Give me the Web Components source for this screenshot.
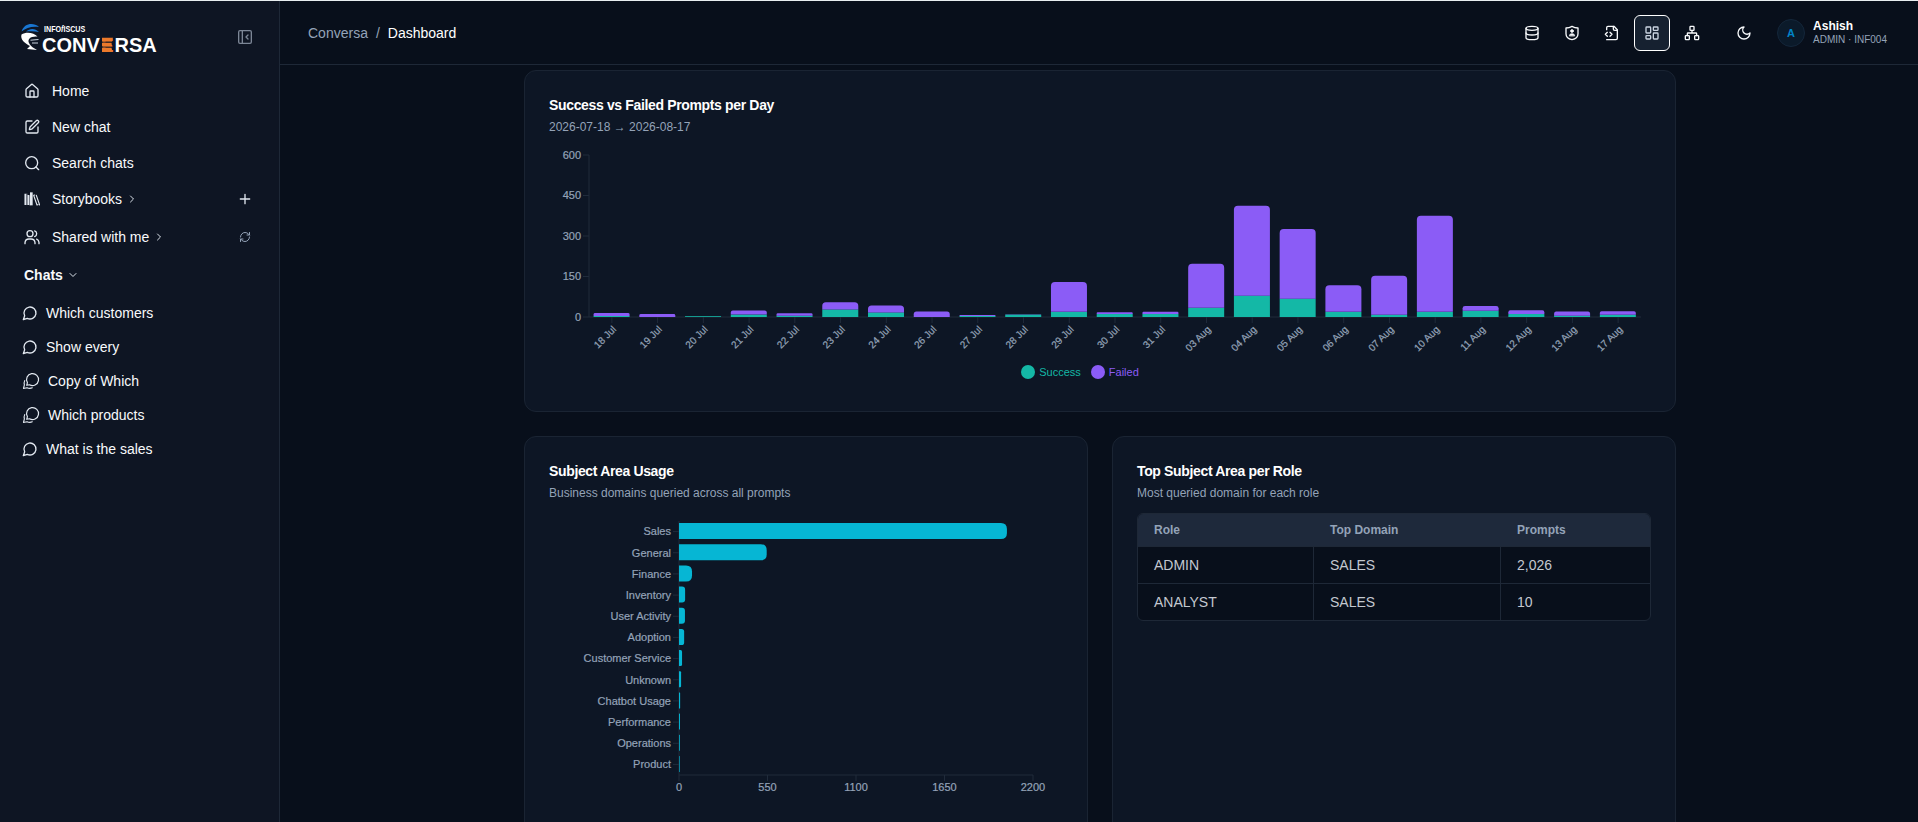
<!DOCTYPE html>
<html lang="en">
<head>
<meta charset="utf-8">
<title>Conversa - Dashboard</title>
<style>
  :root {
    --bg: #080f1b;
    --panel: #0e1523;
    --card: #0d1625;
    --line: #1e2837;
    --fg: #f8fafc;
    --muted: #94a3b8;
    --teal: #14b8a6;
    --violet: #8b5cf6;
    --cyan: #06b6d4;
  }
  html, body { height: 100%; }
  body {
    margin: 0;
    overflow: hidden;
    background: var(--bg);
    color: var(--fg);
    font: 14px/20px "Liberation Sans", Arial, sans-serif;
  }
</style>
</head>
<body>
<conversa-app></conversa-app>

<script>
const ICONS = {
  home: '<path d="M15 21v-8a1 1 0 0 0-1-1h-4a1 1 0 0 0-1 1v8"/><path d="M3 10a2 2 0 0 1 .709-1.528l7-5.999a2 2 0 0 1 2.582 0l7 5.999A2 2 0 0 1 21 10v9a2 2 0 0 1-2 2H5a2 2 0 0 1-2-2z"/>',
  edit: '<path d="M12 3H5a2 2 0 0 0-2 2v14a2 2 0 0 0 2 2h14a2 2 0 0 0 2-2v-7"/><path d="M18.375 2.625a1 1 0 0 1 3 3l-9.013 9.014a2 2 0 0 1-.853.505l-2.873.84a.5.5 0 0 1-.62-.62l.84-2.873a2 2 0 0 1 .506-.852z"/>',
  search: '<circle cx="11.500" cy="11.500" r="9"/><path d="m22 22-4-4"/>',
  books: '<path d="M2 4v17M6.500 6v15" stroke-width="2.600" stroke-linecap="butt"/><path d="M11 2v19.500" stroke-width="4" stroke-linecap="butt"/><path d="M4.300 4.500v16M8.700 7v14" stroke-width=".8"/><path d="m14.500 6.500 5 14.500M18.500 6.500 23.500 21M14.500 6.500l1.500-.5M19.500 21l1.500-.5" stroke-width="1.700"/>',
  users: '<path d="M16.500 22v-1.500a6 6 0 0 0-6-5.500h-3a6 6 0 0 0-6 5.500V22"/><circle cx="9" cy="7" r="4.500"/><path d="M22.500 22v-2a6 6 0 0 0-3.500-4.800M16 2.800a4.500 4.500 0 0 1 0 8.500"/>',
  right: '<path d="m9 18 6-6-6-6"/>',
  down: '<path d="m6 9 6 6 6-6"/>',
  plus: '<path d="M5 12h14M12 5v14"/>',
  refresh: '<path d="M3 12a9 9 0 0 1 9-9 9.750 9.750 0 0 1 6.740 2.740L21 8"/><path d="M21 3v5h-5"/><path d="M21 12a9 9 0 0 1-9 9 9.750 9.750 0 0 1-6.740-2.740L3 16"/><path d="M8 16H3v5"/>',
  panel: '<rect width="19" height="19" x="2.500" y="2.500" rx="2"/><path d="M8 2.500v19M16.500 15l-3-3 3-3"/>',
  chat: '<path d="M7.900 20A9 9 0 1 0 4 16.100L2 22Z"/>',
  chats: '<path d="M10 17A8 8 0 1 0 7.200 14.200L6.300 17.700Z" stroke-width="1.600"/><path d="M3.600 11.500a8 8 0 0 0-.4 5.800L2 22l4.700-1.100a8.500 8.500 0 0 0 7 .2" stroke-width="1.500"/>',
  database: '<ellipse cx="12" cy="5" rx="9" ry="3"/><path d="M3 5v14a9 3 0 0 0 18 0V5"/><path d="M3 12a9 3 0 0 0 18 0"/>',
  shield: '<path d="M21 13c0 5-4 8-9 9-5-1-9-4-9-9V4.500c3.500 0 6-.7 9-2.500 3 1.800 5.500 2.500 9 2.500z"/><circle cx="12" cy="9" r="2" fill="currentColor" stroke-width="1.500"/><path d="M8 16c0-2 1.500-3 4-3s4 1 4 3z" fill="currentColor" stroke-width="1"/>',
  filecode: '<path d="M4 22h14a2 2 0 0 0 2-2V7l-5-5H6a2 2 0 0 0-2 2v3"/><path d="M14 2v4a2 2 0 0 0 2 2h4"/><path d="m5 11-3 3 3 3M9 17l3-3-3-3"/>',
  dashboard: '<rect width="7" height="9" x="3" y="3" rx="1"/><rect width="7" height="5" x="14" y="3" rx="1"/><rect width="7" height="9" x="14" y="12" rx="1"/><rect width="7" height="5" x="3" y="16" rx="1"/>',
  network: '<rect x="16" y="16" width="6" height="6" rx="1"/><rect x="2" y="16" width="6" height="6" rx="1"/><rect x="9" y="2" width="6" height="6" rx="1"/><path d="M5 16v-3a1 1 0 0 1 1-1h12a1 1 0 0 1 1 1v3M12 12V8"/>',
  moon: '<path d="M12 3a6 6 0 0 0 9 9 9 9 0 1 1-9-9Z"/>'
};

/* --- icon --- */
class UiIcon extends HTMLElement {
  connectedCallback() {
    const size = this.getAttribute('size') || 16;
    const root = this.attachShadow({ mode: 'open' });
    root.innerHTML = `
      <style>
        :host { display: block; flex: none; width: ${size}px; height: ${size}px; }
        svg { display: block; fill: none; stroke: currentColor; stroke-width: 2; stroke-linecap: round; stroke-linejoin: round; }
      </style>
      <svg width="${size}" height="${size}" viewBox="0 0 24 24">${ICONS[this.getAttribute('name')]}</svg>`;
  }
}

/* --- logo --- */
class AppLogo extends HTMLElement {
  constructor() {
    super();
    this.attachShadow({ mode: 'open' }).innerHTML = `
      <style>
        :host { display: block; width: 140px; height: 44px; }
        svg { display: block; }
        text { font-family: "Liberation Sans", Arial, sans-serif; font-weight: bold; fill: #fff; }
        .e { fill: #ed7a2b; }
      </style>
      <svg width="140" height="44" viewBox="20 15 140 44">
        <path d="M21.500 31.500C24 23.500 33 22 39 27C32 26 26.500 27.500 21.500 31.500Z" fill="#1976d2"/>
        <path d="M26 31.500C30 28 35 28 39 32C35 31 30 31 26 31.500Z" fill="#1976d2"/>
        <path d="M21.500 34.500C20 39.500 25 43.500 30 46L27 49L37 50L32.500 47.200C28 43.500 26.500 39 32 37C34 36.300 36 36.300 37.500 36.500C34 32.500 26 31.500 21.500 34.500Z" fill="#fff"/>
        <path d="M30.500 40.200l8-.7M32 43h6" stroke="#cbd5e1" stroke-width="1"/>
        <text transform="translate(44 31.500) scale(.77 1)" font-size="9.300">INFO<tspan font-style="italic">f</tspan>ISCUS</text>
        <text y="52" font-size="20"><tspan x="42">CONV</tspan><tspan x="101.500" class="e" font-size="18" dy="-.5">E</tspan><tspan x="114.500" dy=".5">RSA</tspan></text>
        <path d="M102 37.800h11l-1 4h-10zM102 42.600h9.500l.5 4h-10zM102 47.500h9.500l1 4.500H102z" fill="#ed7a2b"/>
        <path d="M102 42.200h10M102 47.050h10" stroke="#0e1523" stroke-width=".8"/>
      </svg>`;
  }
}

/* --- sidebar row --- */
class NavItem extends HTMLElement {
  connectedCallback() {
    const icon = this.getAttribute('icon');
    const caret = this.getAttribute('caret');
    const action = this.getAttribute('action');
    this.attachShadow({ mode: 'open' }).innerHTML = `
      <style>
        :host { display: flex; align-items: center; height: 36px; padding: 0 26px 0 24px; gap: 12px; }
        :host([chat]) { height: 34px; gap: 8px; padding-left: 22px; }
        :host([heading]) { font-weight: bold; }
        .label { display: flex; align-items: center; gap: 4px; flex: 1; white-space: nowrap; }
        ui-icon { color: #e2e8f0; }
        .label ui-icon { color: #dbe2ea; }
        .dim { color: #94a3b8; margin-right: 2px; }
      </style>
      ${icon ? `<ui-icon name="${icon}" size="${icon === 'chats' ? 18 : 16}"></ui-icon>` : ''}
      <span class="label"><slot></slot>${caret ? `<ui-icon name="${caret}" size="12"></ui-icon>` : ''}</span>
      ${action ? `<ui-icon name="${action}" size="${action === 'plus' ? 16 : 12}" class="${action === 'plus' ? '' : 'dim'}"></ui-icon>` : ''}`;
  }
}

class AppSidebar extends HTMLElement {
  constructor() {
    super();
    this.attachShadow({ mode: 'open' }).innerHTML = `
      <style>
        :host { display: block; box-sizing: border-box; width: 280px; background: var(--panel); border-right: 1px solid var(--line); }
        .top { display: flex; justify-content: space-between; align-items: center; height: 44px; padding: 14px 26px 14px 20px; }
        .top ui-icon { color: #7c8696; }
        nav { display: flex; flex-direction: column; }
        nav nav-item:nth-child(5) { margin-top: 2px; }
        nav nav-item:nth-child(6) { margin: 2px 0 3px; }
      </style>
      <div class="top"><app-logo></app-logo><ui-icon name="panel"></ui-icon></div>
      <nav>
        <nav-item icon="home">Home</nav-item>
        <nav-item icon="edit">New chat</nav-item>
        <nav-item icon="search">Search chats</nav-item>
        <nav-item icon="books" caret="right" action="plus">Storybooks</nav-item>
        <nav-item icon="users" caret="right" action="refresh">Shared with me</nav-item>
        <nav-item heading caret="down">Chats</nav-item>
        <nav-item chat icon="chat">Which customers</nav-item>
        <nav-item chat icon="chat">Show every</nav-item>
        <nav-item chat icon="chats">Copy of Which</nav-item>
        <nav-item chat icon="chats">Which products</nav-item>
        <nav-item chat icon="chat">What is the sales</nav-item>
      </nav>`;
  }
}

/* --- header --- */
class AppHeader extends HTMLElement {
  constructor() {
    super();
    this.attachShadow({ mode: 'open' }).innerHTML = `
      <style>
        :host { display: flex; align-items: center; box-sizing: border-box; height: 64px; padding: 0 31px 0 28px; border-bottom: 1px solid var(--line); }
        .crumbs { display: flex; gap: 8px; flex: 1; color: var(--muted); }
        .crumbs b { font-weight: normal; color: #fff; }
        .tools { display: flex; gap: 4px; }
        .btn { display: flex; align-items: center; justify-content: center; box-sizing: border-box; width: 36px; height: 36px; border: 1px solid transparent; border-radius: 6px; }
        .btn.active { border-color: #fff; background: #162130; color: #cbd5e1; }
        .theme { margin-left: 12px; }
        .avatar { display: flex; align-items: center; justify-content: center; box-sizing: border-box; width: 28px; height: 28px; margin: 0 8px 0 15px; border: 1px solid #14263a; border-radius: 50%; background: #0b1a2a; color: #0284c7; font: bold 11px "Liberation Sans", Arial, sans-serif; }
        .who { font-size: 10px; line-height: 12px; color: var(--muted); }
        .who b { display: block; font-size: 12px; line-height: 15px; color: #fff; }
      </style>
      <div class="crumbs"><span>Conversa</span><span>/</span><b>Dashboard</b></div>
      <div class="tools">
        <span class="btn"><ui-icon name="database"></ui-icon></span>
        <span class="btn"><ui-icon name="shield"></ui-icon></span>
        <span class="btn"><ui-icon name="filecode"></ui-icon></span>
        <span class="btn active"><ui-icon name="dashboard"></ui-icon></span>
        <span class="btn"><ui-icon name="network"></ui-icon></span>
        <span class="btn theme"><ui-icon name="moon"></ui-icon></span>
      </div>
      <span class="avatar">A</span>
      <div class="who"><b>Ashish</b>ADMIN · INF004</div>`;
  }
}

/* --- card --- */
class DashCard extends HTMLElement {
  connectedCallback() {
    this.attachShadow({ mode: 'open' }).innerHTML = `
      <style>
        :host { display: block; box-sizing: border-box; padding: 24px; border: 1px solid #1a2433; border-radius: 12px; background: var(--card); }
        h3 { margin: 0; font-size: 14px; line-height: 20px; letter-spacing: -0.35px; color: #fff; }
        p { margin: 4px 0 12px; font-size: 12px; line-height: 16px; color: var(--muted); }
      </style>
      <h3>${this.getAttribute('heading')}</h3>
      <p>${this.getAttribute('note')}</p>
      <slot></slot>`;
  }
}

const CHART_STYLE = `
  :host { display: block; }
  svg { display: block; }
  text { font-family: "Liberation Sans", Arial, sans-serif; font-size: 11px; fill: #94a3b8; stroke: #94a3b8; stroke-width: .2; }
  .axis { stroke: #202b3b; fill: none; }`;

/* --- stacked chart: [day, success, failed] --- */
class PromptsChart extends HTMLElement {
  #data = [
    ['18 Jul', 4, 11], ['19 Jul', 0, 11], ['20 Jul', 3, 0], ['21 Jul', 9, 15], ['22 Jul', 5, 9],
    ['23 Jul', 28, 27], ['24 Jul', 17, 26], ['26 Jul', 0, 20], ['27 Jul', 4, 3], ['28 Jul', 9, 1],
    ['29 Jul', 19, 111], ['30 Jul', 11, 7], ['31 Jul', 11, 8], ['03 Aug', 34, 163], ['04 Aug', 79, 333],
    ['05 Aug', 68, 258], ['06 Aug', 19, 99], ['07 Aug', 8, 145], ['10 Aug', 19, 356], ['11 Aug', 23, 18],
    ['12 Aug', 11, 14], ['13 Aug', 5, 15], ['17 Aug', 8, 13]
  ];

  connectedCallback() {
    const x0 = 40, y0 = 170, top = 8;
    const step = 1052 / this.#data.length;
    const k = (y0 - top) / 600;
    let out = '';

    for (const v of [0, 150, 300, 450, 600]) {
      const y = y0 - v * k;
      out += `<path class="axis" d="M${x0 - 6} ${y}h6"/><text x="${x0 - 8}" y="${y + 3.9}" text-anchor="end">${v}</text>`;
    }
    out += `<path class="axis" d="M${x0} ${top}V${y0}H${x0 + 1052}"/>`;

    this.#data.forEach(([day, ok, bad], i) => {
      const x = x0 + step * (i + 0.1);
      const cx = x0 + step * (i + 0.5);
      const hs = ok * k, hf = bad * k;
      const r = Math.min(4, hf / 2);
      out += `<path class="axis" d="M${cx} ${y0}v6"/>`;
      out += `<rect x="${x}" y="${y0 - hs}" width="36" height="${hs}" fill="var(--teal)"/>`;
      if (hf) out += `<path fill="var(--violet)" d="M${x} ${y0 - hs}v${r - hf}q0 ${-r} ${r} ${-r}h${36 - 2 * r}q${r} 0 ${r} ${r}v${hf - r}z"/>`;
      out += `<text class="day" x="${cx}" y="${y0 + 8}" dy="0.71em" text-anchor="end" transform="rotate(-45 ${cx} ${y0 + 8})">${day}</text>`;
    });

    this.attachShadow({ mode: 'open' }).innerHTML = `
      <style>
        ${CHART_STYLE}
        .day { font-size: 10px; }
        .legend { display: flex; justify-content: center; gap: 10px; margin-right: 40px; font-size: 11px; line-height: 16px; }
        .legend span { display: flex; align-items: center; gap: 4px; color: var(--c); }
        .legend i { width: 14px; height: 14px; border-radius: 50%; background: var(--c); }
      </style>
      <svg width="1102" height="217">${out}</svg>
      <div class="legend">
        <span style="--c: var(--teal)"><i></i>Success</span>
        <span style="--c: var(--violet)"><i></i>Failed</span>
      </div>`;
  }
}

/* --- horizontal bars --- */
class AreaChart extends HTMLElement {
  #data = [
    ['Sales', 2038], ['General', 545], ['Finance', 81], ['Inventory', 38], ['User Activity', 37],
    ['Adoption', 32], ['Customer Service', 19], ['Unknown', 13], ['Chatbot Usage', 7],
    ['Performance', 6], ['Operations', 5], ['Product', 4]
  ];

  connectedCallback() {
    const x0 = 130, top = 8, height = 254, width = 354;
    const step = height / this.#data.length;
    const bottom = top + height;
    let out = `<path class="axis" d="M${x0} ${top}V${bottom}H${x0 + width}"/>`;

    this.#data.forEach(([name, value], i) => {
      const y = top + step * (i + 0.1);
      const cy = top + step * (i + 0.5);
      const w = value / 2200 * width;
      const r = Math.min(6, w / 2);
      out += `<path class="axis" d="M${x0 - 6} ${cy}h6"/>`;
      out += `<path fill="var(--cyan)" d="M${x0} ${y}h${w - r}q${r} 0 ${r} ${r}v${16 - 2 * r}q0 ${r} ${-r} ${r}h${r - w}z"/>`;
      out += `<text x="${x0 - 8}" y="${cy + 3.9}" text-anchor="end">${name}</text>`;
    });

    for (const v of [0, 550, 1100, 1650, 2200]) {
      const x = x0 + v / 2200 * width;
      out += `<path class="axis" d="M${x} ${bottom}v6"/><text x="${x}" y="${bottom + 16}" text-anchor="middle">${v}</text>`;
    }

    this.attachShadow({ mode: 'open' }).innerHTML = `
      <style>${CHART_STYLE}</style>
      <svg width="514" height="300">${out}</svg>`;
  }
}

/* --- table --- */
class RoleTable extends HTMLElement {
  constructor() {
    super();
    const rows = [['ADMIN', 'SALES', '2,026'], ['ANALYST', 'SALES', '10']];
    this.attachShadow({ mode: 'open' }).innerHTML = `
      <style>
        :host { display: block; border: 1px solid var(--line); border-radius: 6px; overflow: hidden; background: #080f1b; }
        .row { display: grid; grid-template-columns: 176px 187px 1fr; height: 36px; line-height: 36px; border-top: 1px solid var(--line); color: #c3c8d0; }
        .row span { padding-left: 16px; border-right: 1px solid var(--line); }
        .row span:last-child { border: 0; }
        .head { height: 32px; line-height: 32px; border: 0; background: #1e293b; color: var(--muted); font-size: 12px; font-weight: bold; }
        .head span { border-color: transparent; }
      </style>
      <div class="row head"><span>Role</span><span>Top Domain</span><span>Prompts</span></div>
      ${rows.map(r => `<div class="row">${r.map(c => `<span>${c}</span>`).join('')}</div>`).join('')}`;
  }
}

/* --- page --- */
class ConversaApp extends HTMLElement {
  constructor() {
    super();
    this.attachShadow({ mode: 'open' }).innerHTML = `
      <style>
        :host { display: grid; grid-template-columns: 280px 1fr; box-sizing: border-box; height: 822px; border-top: 1px solid #e8eef0; overflow: hidden; }
        .main { min-width: 0; }
        .content { display: grid; grid-template-columns: 564px 564px; gap: 24px; width: 1152px; margin: 5px 0 0 244px; }
        .wide { grid-column: 1 / -1; height: 342px; }
        .half { height: 420px; }
      </style>
      <app-sidebar></app-sidebar>
      <div class="main">
        <app-header></app-header>
        <div class="content">
          <dash-card class="wide" heading="Success vs Failed Prompts per Day" note="2026-07-18 → 2026-08-17"><prompts-chart></prompts-chart></dash-card>
          <dash-card class="half" heading="Subject Area Usage" note="Business domains queried across all prompts"><area-chart></area-chart></dash-card>
          <dash-card class="half" heading="Top Subject Area per Role" note="Most queried domain for each role"><role-table></role-table></dash-card>
        </div>
      </div>`;
  }
}

customElements.define('ui-icon', UiIcon);
customElements.define('app-logo', AppLogo);
customElements.define('nav-item', NavItem);
customElements.define('app-sidebar', AppSidebar);
customElements.define('app-header', AppHeader);
customElements.define('dash-card', DashCard);
customElements.define('prompts-chart', PromptsChart);
customElements.define('area-chart', AreaChart);
customElements.define('role-table', RoleTable);
customElements.define('conversa-app', ConversaApp);
</script>
</body>
</html>
